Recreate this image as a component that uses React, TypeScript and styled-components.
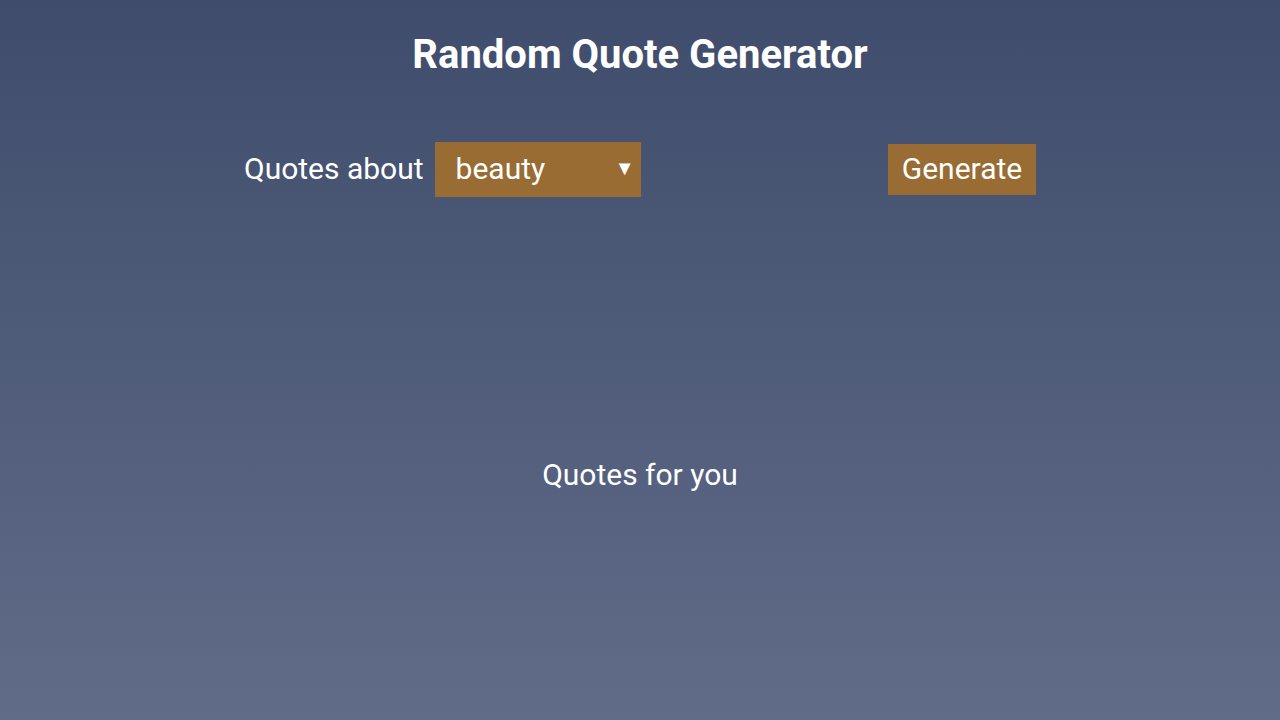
import React, { useState } from "react";
import styled, { createGlobalStyle } from "styled-components";

const GlobalStyle = createGlobalStyle`
  html, body { margin: 0; padding: 0; height: 100%; }
  body {
    font-family: Roboto, "Liberation Sans", sans-serif;
    background: linear-gradient(to bottom, #3f4c6b 0%, #606c88 100%);
    min-height: 720px;
    color: #ffffff;
  }
`;

const Page = styled.div`
  height: 720px;
  display: flex;
  flex-direction: column;
  align-items: center;
`;

const Title = styled.h1`
  margin: 31px 0 0;
  font-size: 40px;
  font-weight: 700;
  line-height: 48px;
`;

const Controls = styled.div`
  margin-top: 63px;
  width: 792px;
  display: flex;
  justify-content: space-between;
  align-items: center;
`;

const Group = styled.div`
  display: flex;
  align-items: center;
  gap: 11px;
`;

const Label = styled.span`
  font-size: 30px;
  line-height: 34px;
  padding-bottom: 2px;
`;

const SelectWrap = styled.div`
  position: relative;
  width: 206px;
  height: 55px;
`;

const Select = styled.select`
  appearance: none;
  width: 100%;
  height: 100%;
  border: none;
  outline: none;
  background: #986c33;
  color: #ffffff;
  font-family: Roboto, "Liberation Sans", sans-serif;
  font-size: 30px;
  padding: 0 0 2px 21px;
  border-radius: 0;
`;

const Arrow = styled.span`
  position: absolute;
  right: 6px;
  top: 50%;
  transform: translateY(-60%);
  font-size: 20px;
  pointer-events: none;
`;

const Button = styled.button`
  width: 148px;
  height: 51px;
  border: none;
  background: #986c33;
  color: #ffffff;
  font-family: Roboto, "Liberation Sans", sans-serif;
  font-size: 30px;
  padding: 0 0 2px;
  cursor: pointer;
`;

const Output = styled.p`
  margin: 261px 0 0;
  font-size: 30px;
  line-height: 34px;
`;

export default function App() {
  const [topic, setTopic] = useState("beauty");
  return (
    <>
      <GlobalStyle />
      <Page>
        <Title>Random Quote Generator</Title>
        <Controls>
          <Group>
            <Label>Quotes about</Label>
            <SelectWrap>
              <Select value={topic} onChange={(e) => setTopic(e.target.value)}>
                <option value="beauty">beauty</option>
                <option value="love">love</option>
                <option value="life">life</option>
              </Select>
              <Arrow>▼</Arrow>
            </SelectWrap>
          </Group>
          <Button>Generate</Button>
        </Controls>
        <Output>Quotes for you</Output>
      </Page>
    </>
  );
}
